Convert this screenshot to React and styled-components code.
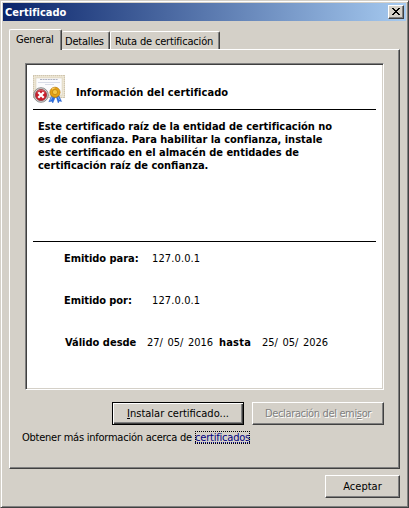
import React from 'react';
import styled, { createGlobalStyle } from 'styled-components';

const GlobalStyle = createGlobalStyle`
  * { box-sizing: border-box; }
  body { margin: 0; background: #d4d0c8; }
`;

const Window = styled.div`
  width: 409px;
  height: 508px;
  display: flex;
  flex-direction: column;
  padding: 2px;
  background: #d4d0c8;
  border: 1px solid;
  border-color: #d4d0c8 #404040 #404040 #d4d0c8;
  box-shadow: inset 1px 1px #fff, inset -1px -1px #808080;
  font: 11px/13px 'DejaVu Sans Condensed', 'DejaVu Sans', sans-serif;
  color: #000;
`;

const TitleBar = styled.header`
  height: 18px;
  flex: none;
  display: flex;
  align-items: center;
  justify-content: space-between;
  padding: 0 2px;
  color: #fff;
  background: linear-gradient(to right, #0a246a, #a6caf0);
`;

const Text = styled.span`
  display: block;
  white-space: pre;
  font-weight: ${(p) => (p.$bold ? 700 : 400)};
  letter-spacing: ${(p) => p.$track || 0}px;
  word-spacing: ${(p) => p.$gap || 0}px;
`;

const CloseButton = styled.button`
  width: 16px;
  height: 14px;
  padding: 0 1px 1px 0;
  display: flex;
  align-items: center;
  justify-content: center;
  background: #d4d0c8;
  border: 1px solid;
  border-color: #fff #404040 #404040 #fff;
  box-shadow: inset -1px -1px #808080;
`;

const Body = styled.main`
  flex: 1;
  display: flex;
  flex-direction: column;
  padding: 8px 6px 7px;
`;

const TabList = styled.div`
  display: flex;
  align-items: flex-end;
  height: 20px;
`;

const Tab = styled.div`
  width: ${(p) => p.$width}px;
  height: ${(p) => (p.$active ? 21 : 18)}px;
  margin-bottom: ${(p) => (p.$active ? -1 : 0)}px;
  padding: 3px 0 0 ${(p) => p.$indent}px;
  z-index: ${(p) => (p.$active ? 1 : 0)};
  background: #d4d0c8;
  border-top: 1px solid #fff;
  border-left: ${(p) => (p.$covered ? 0 : 1)}px solid #fff;
  border-right: 1px solid #404040;
  box-shadow: inset -1px 0 #808080;
  border-radius: 2px 2px 0 0;
`;

const Panel = styled.section`
  width: 391px;
  height: 420px;
  padding: 13px 14px 0 12px;
  display: flex;
  flex-direction: column;
  border: 1px solid;
  border-color: #fff #404040 #404040 #fff;
  box-shadow: inset -1px -1px #808080;
`;

const Certificate = styled.article`
  width: 359px;
  height: 327px;
  margin-left: 3px;
  padding: 10px 6px 0;
  background: #fff;
  border: 1px solid;
  border-color: #808080 #fff #fff #808080;
  box-shadow: inset 1px 1px #404040, inset -1px -1px #d4d0c8;
`;

const Heading = styled.div`
  width: 343px;
  height: 36px;
  margin-left: 1px;
  padding-top: 1px;
  display: flex;
  border-bottom: 1px solid #000;
  svg { flex: none; }
`;

const HeadingText = styled.div`
  margin: 11px 0 0 10px;
`;

const Warning = styled.div`
  width: 343px;
  height: 132px;
  margin-left: 1px;
  padding: 10px 0 0 5px;
  border-bottom: 1px solid #000;
`;

const Field = styled.div`
  display: flex;
  height: 13px;
  margin: ${(p) => p.$top}px 0 0 ${(p) => p.$left}px;
`;

const Cell = styled.div`
  width: ${(p) => p.$width}px;
`;

const Actions = styled.div`
  display: flex;
  justify-content: flex-end;
  gap: 8px;
  margin-top: 12px;
  padding-right: 1px;
`;

const Button = styled.button`
  width: ${(p) => p.$width}px;
  height: 23px;
  padding: 0 0 1px;
  display: flex;
  align-items: center;
  justify-content: center;
  font: inherit;
  color: ${(p) => (p.disabled ? '#808080' : '#000')};
  text-shadow: ${(p) => (p.disabled ? '1px 1px #fff' : 'none')};
  background: #d4d0c8;
  border: 1px solid;
  border-color: ${(p) => (p.$primary ? '#000' : '#fff #404040 #404040 #fff')};
  box-shadow: ${(p) =>
    p.$primary
      ? 'inset 1px 1px #fff, inset -1px -1px #404040, inset -2px -2px #808080'
      : 'inset -1px -1px #808080'};
  u { text-underline-offset: 1px; text-decoration-thickness: 1px; }
`;

const MoreInfo = styled.div`
  display: flex;
  margin-top: 6px;
`;

const LinkPrefix = styled.div`
  width: 173px;
`;

const Link = styled.a`
  height: 13px;
  width: 55px;
  color: #00007f;
  outline: 1px dotted #000;
  outline-offset: -1px;
  text-decoration: underline dotted 1px;
  text-underline-offset: 1px;
`;

const Footer = styled.footer`
  display: flex;
  justify-content: flex-end;
  margin-top: 6px;
`;

const CloseIcon = () => (
  <svg width="8" height="7" viewBox="0 0 8 7" shapeRendering="crispEdges">
    <path d="M0 0h2v1H0zM6 0h2v1H6zM1 1h2v1H1zM5 1h2v1H5zM2 2h4v1H2zM3 3h2v1H3zM2 4h4v1H2zM1 5h2v1H1zM5 5h2v1H5zM0 6h2v1H0zM6 6h2v1H6z" />
  </svg>
);

const CertificateIcon = () => (
  <svg width="33" height="29" viewBox="0 0 33 29">
    <rect x=".5" y=".5" width="31" height="22" fill="#e9e1cd" stroke="#d0c6af" />
    <rect x="1" y="1" width="30" height="21" fill="none" stroke="#f4efe2" strokeDasharray="1 1" />
    <rect x="3" y="3" width="26" height="17" fill="#fbfbfd" stroke="#ddd5c3" strokeWidth=".6" />
    <path d="M7 4.5h18" stroke="#aeb2c2" strokeDasharray="2 .6" />
    <path d="M5 7.5h22M12 9.5h9" stroke="#cfd4e2" strokeWidth=".8" />
    <path d="m19 20-3.2 6.7 3-.5 1 1.8 3-7zM23 21l2.2 7 1.2-2 2.2.5-3.2-7z" fill="#2c6fe3" stroke="#1c50b5" strokeWidth=".4" />
    <path d="m19.5 21-2 4.4M25 22l1.6 3" stroke="#7fb2f7" />
    <circle cx="22" cy="17.3" r="5.1" fill="#e5a215" stroke="#b57506" strokeWidth=".7" />
    <circle cx="22" cy="17.1" r="2.6" fill="#f4c644" stroke="#b87c10" strokeWidth=".7" />
    <path d="M19 14.2q1.2-1.2 2.6-1.2" fill="none" stroke="#ffe393" />
    <circle cx="8" cy="20" r="7.3" fill="#cfcfcf" stroke="#858585" strokeWidth=".9" />
    <circle cx="8" cy="20" r="5.6" fill="#c91d2a" stroke="#8e3037" strokeWidth=".7" />
    <path d="M3.8 17.5a5 5 0 0 1 8.4 0" fill="none" stroke="#e26a70" strokeWidth=".8" />
    <path d="m5.3 17.3 5.4 5.4m0-5.4-5.4 5.4" stroke="#fff" strokeWidth="2.3" />
  </svg>
);

export default function App() {
  return (
    <>
      <GlobalStyle />
      <Window>
        <TitleBar>
          <Text $bold $track={0.03}>Certificado</Text>
          <CloseButton aria-label="Cerrar"><CloseIcon /></CloseButton>
        </TitleBar>
        <Body>
          <TabList>
            <Tab $active $width={53} $indent={6}><Text $track={-0.2}>General</Text></Tab>
            <Tab $covered $width={48} $indent={3}><Text $track={-0.2}>Detalles</Text></Tab>
            <Tab $width={110} $indent={4}><Text $track={-0.17}>Ruta de certificación</Text></Tab>
          </TabList>
          <Panel>
            <Certificate>
              <Heading>
                <CertificateIcon />
                <HeadingText><Text $bold $track={0.06}>Información del certificado</Text></HeadingText>
              </Heading>
              <Warning>
                <Text $bold $track={-0.02}>Este certificado raíz de la entidad de certificación no</Text>
                <Text $bold $track={-0.02}>es de confianza. Para habilitar la confianza, instale</Text>
                <Text $bold>este certificado en el almacén de entidades de</Text>
                <Text $bold>certificación raíz de confianza.</Text>
              </Warning>
              <Field $top={10} $left={32}>
                <Cell $width={88}><Text $bold $track={-0.05}>Emitido para:</Text></Cell>
                <Text $track={0.12}>127.0.0.1</Text>
              </Field>
              <Field $top={29} $left={32}>
                <Cell $width={88}><Text $bold $track={-0.07}>Emitido por:</Text></Cell>
                <Text $track={0.12}>127.0.0.1</Text>
              </Field>
              <Field $top={29} $left={33}>
                <Cell $width={82}><Text $bold>Válido desde</Text></Cell>
                <Cell $width={72}><Text $gap={1.4}>27/ 05/ 2016</Text></Cell>
                <Cell $width={43}><Text $bold $track={0.2}>hasta</Text></Cell>
                <Text $gap={1.4}>25/ 05/ 2026</Text>
              </Field>
            </Certificate>
            <Actions>
              <Button $primary $width={132}><Text><u>I</u>nstalar certificado...</Text></Button>
              <Button disabled $width={132}><Text $track={-0.35}>Declaración del emi<u>s</u>or</Text></Button>
            </Actions>
            <MoreInfo>
              <LinkPrefix><Text $track={-0.24}>Obtener más información acerca de </Text></LinkPrefix>
              <Link href="#"><Text $track={-0.2}>certificados</Text></Link>
            </MoreInfo>
          </Panel>
          <Footer><Button $width={75}><Text>Aceptar</Text></Button></Footer>
        </Body>
      </Window>
    </>
  );
}
